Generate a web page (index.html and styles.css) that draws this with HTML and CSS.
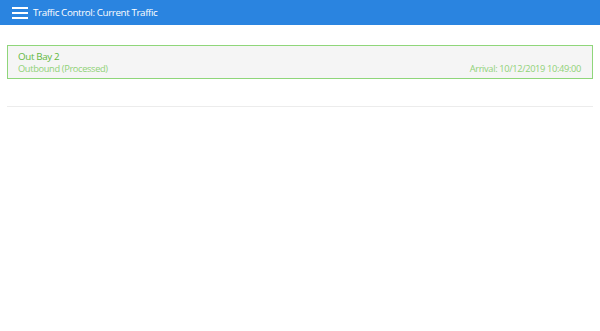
FILE: index.html
```html
<!DOCTYPE html>
<html>
<head>
<meta charset="utf-8">
<link rel="stylesheet" href="styles.css">
</head>
<body>
<header class="topbar">
  <span class="menu-icon"><span></span><span></span><span></span></span>
  <span class="title">Traffic Control: Current Traffic</span>
</header>
<main class="content">
  <div class="card">
    <div class="card-left">
      <div class="card-title">Out Bay 2</div>
      <div class="card-sub">Outbound (Processed)</div>
    </div>
    <div class="card-right">Arrival: 10/12/2019 10:49:00</div>
  </div>
  <div class="separator"></div>
</main>
</body>
</html>
```
FILE: styles.css
```css
html, body {
  margin: 0;
  padding: 0;
  background: #ffffff;
  font-family: "Open Sans", "Noto Sans", sans-serif;
}
.topbar {
  height: 25px;
  background: #2a84e0;
  display: flex;
  align-items: center;
  padding-left: 12px;
  color: #ffffff;
  font-size: 9.8px;
  letter-spacing: -0.38px;
}
.menu-icon {
  display: flex;
  flex-direction: column;
  justify-content: space-between;
  width: 16px;
  height: 12px;
  margin-right: 5px;
}
.menu-icon span {
  display: block;
  height: 2px;
  background: #ffffff;
}
.content {
  padding: 20px 7px 0 7px;
}
.card {
  border: 1px solid #8fd67a;
  background: #f5f5f5;
  display: flex;
  justify-content: space-between;
  align-items: flex-end;
  padding: 5px 11px 3px 10px;
  font-size: 9.3px;
  line-height: 12px;
  letter-spacing: -0.36px;
}
.card-title {
  color: #62b83e;
  font-size: 9.8px;
}
.card-sub {
  color: #90d277;
}
.card-right {
  color: #90d277;
}
.separator {
  margin-top: 27px;
  height: 1px;
  background: #ececec;
}
```
